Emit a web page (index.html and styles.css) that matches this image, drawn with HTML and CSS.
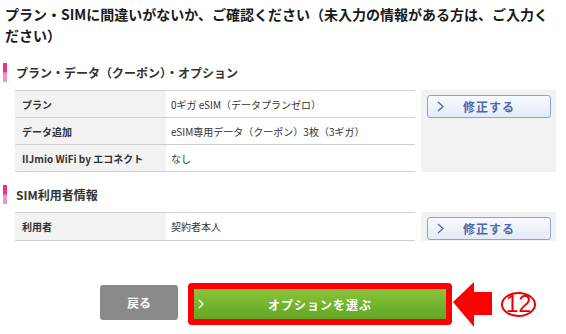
FILE: index.html
```html
<!DOCTYPE html>
<html>
<head>
<meta name="viewport" content="width=device-width, initial-scale=1">
<link rel="stylesheet" href="styles.css">
</head>
<body>
<div class="page">
  <h1 class="page-title">プラン・SIMに間違いがないか、ご確認ください（未入力の情報がある方は、ご入力ください）</h1>

  <div class="section">
    <h2 class="section-title">プラン・データ（クーポン）・オプション</h2>
    <div class="confirm">
      <table class="info">
        <tr><th>プラン</th><td>0ギガ eSIM（データプランゼロ）</td></tr>
        <tr><th>データ追加</th><td>eSIM専用データ（クーポン）3枚（3ギガ）</td></tr>
        <tr><th>IIJmio WiFi by エコネクト</th><td>なし</td></tr>
      </table>
      <div class="edit">
        <a class="edit-btn"><svg class="chev" width="7" height="11" viewBox="0 0 7 11"><polyline points="1,1 6,5.5 1,10" fill="none" stroke="#4a68ad" stroke-width="1.4"/></svg>修正する</a>
      </div>
    </div>
  </div>

  <div class="section">
    <h2 class="section-title">SIM利用者情報</h2>
    <div class="confirm">
      <table class="info">
        <tr><th>利用者</th><td>契約者本人</td></tr>
      </table>
      <div class="edit">
        <a class="edit-btn"><svg class="chev" width="7" height="11" viewBox="0 0 7 11"><polyline points="1,1 6,5.5 1,10" fill="none" stroke="#4a68ad" stroke-width="1.4"/></svg>修正する</a>
      </div>
    </div>
  </div>

  <div class="actions">
    <a class="btn-back">戻る</a>
    <div class="mark">
      <a class="btn-next"><svg class="chev-w" width="6" height="10" viewBox="0 0 6 10"><polyline points="1,1 5,5 1,9" fill="none" stroke="#fff" stroke-width="1.4"/></svg>オプションを選ぶ</a>
    </div>
    <svg class="arrow" width="40" height="46" viewBox="0 0 40 46"><polygon points="0,20 21,0 21,10 39,10 39,33 21,33 21,45" fill="#ff0000"/></svg>
    <span class="num">12</span>
  </div>
</div>
</body>
</html>
```

FILE: styles.css
```css
* {
  box-sizing: border-box;
}

body {
  margin: 0;
  background: #fff;
  color: #333;
  font-family: "Noto Sans CJK JP", "Noto Sans", sans-serif;
}

.page-title {
  margin: 0;
  padding: 4px 5px 0;
  font-size: 14px;
  line-height: 21px;
  font-weight: bold;
  color: #1a1a1a;
}

.page-title + .section {
  padding-top: 17px;
}

.section {
  padding-top: 13px;
}

.section-title {
  margin: 0 0 8px 3px;
  padding-left: 13px;
  height: 19px;
  line-height: 19px;
  font-size: 12px;
  font-weight: bold;
  color: #333;
  background: linear-gradient(#e4358a 0%, #e4358a 45%, #f294c4 55%, #f294c4 100%) left top / 4px 100% no-repeat;
}

.confirm {
  display: flex;
  gap: 6px;
  margin-left: 15px;
  width: 541px;
}

.info {
  width: 400px;
  border-collapse: collapse;
  font-size: 10px;
}

.info th, .info td {
  height: 27px;
  padding: 0;
  border-top: 1px solid #cfcfcf;
  border-bottom: 1px solid #cfcfcf;
  text-align: left;
  vertical-align: middle;
}

.info th {
  width: 151px;
  padding-left: 7px;
  background: #f2f2f2;
  font-weight: bold;
  color: #333;
}

.info td {
  padding-left: 5px;
  color: #333;
}

.edit {
  flex: 1;
  background: #f2f2f2;
  padding: 5px 5px 1px 6px;
}

.edit-btn {
  position: relative;
  display: flex;
  align-items: center;
  justify-content: center;
  height: 23px;
  border: 1px solid #8ea2d0;
  border-radius: 3px;
  background: linear-gradient(#f8faff, #e4eaf8);
  color: #4a68ad;
  font-size: 12px;
  font-weight: bold;
  letter-spacing: 1px;
}

.chev {
  position: absolute;
  left: 9px;
  top: 5px;
}

.actions {
  display: flex;
  align-items: flex-start;
  margin-top: 41px;
  padding-left: 100px;
}

.btn-back {
  display: flex;
  align-items: center;
  justify-content: center;
  width: 78px;
  height: 35px;
  margin-top: 3px;
  border-radius: 3px;
  background: #8a8a8a;
  color: #fff;
  font-size: 12px;
  font-weight: bold;
}

.mark {
  margin-left: 10px;
  margin-top: 1px;
  border: 6px solid #ff0000;
  border-radius: 4px;
}

.btn-next {
  position: relative;
  display: flex;
  align-items: center;
  justify-content: center;
  width: 252px;
  height: 30px;
  background: linear-gradient(#8cc43c, #60a521);
  color: #fff;
  font-size: 12px;
  font-weight: bold;
  letter-spacing: 1px;
}

.chev-w {
  position: absolute;
  left: 4px;
  top: 10px;
}

.arrow {
  margin-left: 1px;
}

.num {
  display: flex;
  align-items: center;
  justify-content: center;
  width: 35px;
  height: 25px;
  margin-left: 8px;
  margin-top: 10px;
  border: 2px solid #e60000;
  border-radius: 50%;
  color: #e60000;
  font-family: "Liberation Sans", sans-serif;
  font-size: 23px;
  line-height: 1;
}
```
